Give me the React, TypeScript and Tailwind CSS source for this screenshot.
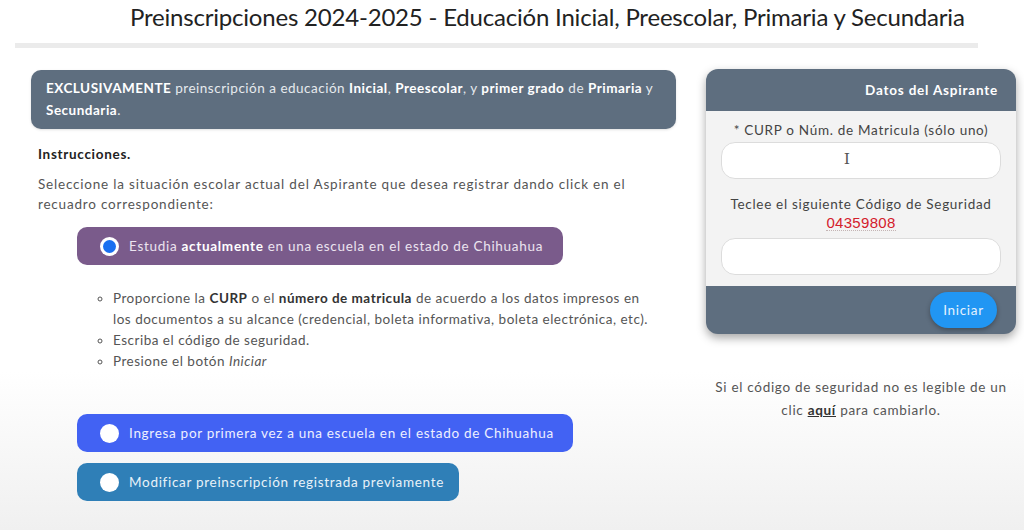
import React from 'react';

const font = { fontFamily: 'Lato, "Open Sans", sans-serif' };

const Radio = ({ checked }: { checked?: boolean }) =>
  checked ? (
    <span className="flex h-[19px] w-[19px] shrink-0 items-center justify-center rounded-full bg-white">
      <span className="h-[13px] w-[13px] rounded-full bg-[#1a6ff0]" />
    </span>
  ) : (
    <span className="h-[19px] w-[19px] shrink-0 rounded-full bg-white" />
  );

const App = () => {
  return (
    <div
      className="h-[530px] w-[1024px] overflow-hidden bg-gradient-to-b from-white from-70% to-[#f0f0f0] text-[13.5px] tracking-[0.7px]"
      style={font}
    >
      <h1 className="pl-[130px] pt-[2px] text-[24px] leading-[30px] text-[#222] tracking-[-0.2px]">
        Preinscripciones 2024-2025 - Educación Inicial, Preescolar, Primaria y Secundaria
      </h1>
      <div className="ml-[15px] mt-[11px] h-[5px] w-[963px] bg-[#ebebeb]" />

      <div className="mt-[22px] flex">
        <div className="ml-[31px] w-[645px]">
          <div className="rounded-[10px] bg-[#5e6e7f] px-[15px] pt-[7px] pb-[8px] leading-[22px] tracking-[0.5px] text-[#e6eaee] shadow-sm">
            <b className="text-white">EXCLUSIVAMENTE</b> preinscripción a educación <b className="text-white">Inicial</b>,{' '}
            <b className="text-white">Preescolar</b>, y <b className="text-white">primer grado</b> de{' '}
            <b className="text-white">Primaria</b> y <b className="text-white">Secundaria</b>.
          </div>

          <div className="ml-[7px] mt-[15px] font-bold text-[#222]">Instrucciones.</div>
          <p className="ml-[7px] mt-[10px] leading-[20px] text-[#555] tracking-[0.8px]">
            Seleccione la situación escolar actual del Aspirante que desea registrar dando click en el
            <br />
            recuadro correspondiente:
          </p>

          <div className="ml-[46px] mt-[13px] flex h-[38px] w-[486px] items-center gap-[10px] rounded-[10px] bg-[#7a5b8b] pl-[23px] text-[#ece4f0]">
            <Radio checked />
            <span>
              Estudia <b className="text-white">actualmente</b> en una escuela en el estado de Chihuahua
            </span>
          </div>

          <ul className="ml-[82px] mt-[23px] list-[circle] leading-[21px] text-[#555] tracking-[0.5px]">
            <li>
              Proporcione la <b className="text-[#333]">CURP</b> o el <b className="text-[#333]">número de matricula</b> de
              acuerdo a los datos impresos en
              <br />
              los documentos a su alcance (credencial, boleta informativa, boleta electrónica, etc).
            </li>
            <li>Escriba el código de seguridad.</li>
            <li>
              Presione el botón <i>Iniciar</i>
            </li>
          </ul>

          <div className="ml-[46px] mt-[42px] flex h-[38px] w-[496px] items-center gap-[10px] rounded-[10px] bg-[#4262f3] pl-[23px] text-[#eef0ff]">
            <Radio />
            <span>Ingresa por primera vez a una escuela en el estado de Chihuahua</span>
          </div>
          <div className="ml-[46px] mt-[11px] flex h-[38px] w-[382px] items-center gap-[10px] rounded-[10px] bg-[#2f7fb7] pl-[23px] text-[#e8f2f9]">
            <Radio />
            <span>Modificar preinscripción registrada previamente</span>
          </div>
        </div>

        <div className="ml-[30px] w-[310px] -mt-[1px]">
          <div className="overflow-hidden rounded-[12px] bg-[#5e6e7f] shadow-[0_4px_10px_rgba(0,0,0,0.35)]">
            <div className="flex h-[42px] items-center justify-end pr-[18px] font-bold text-white tracking-[0.8px]">
              Datos del Aspirante
            </div>
            <div className="bg-[#f3f3f3] px-[15px] pt-[9px] pb-[11px] text-center text-[#444]">
              <div className="leading-[20px]">* CURP o Núm. de Matricula (sólo uno)</div>
              <div className="relative mt-[2px] h-[37px] rounded-[14px] border border-[#dcdcdc] bg-white">
                <span className="absolute left-[122px] top-[6px] font-serif text-[17px] leading-[20px] text-[#555]">I</span>
              </div>
              <div className="mt-[15px] leading-[20px]">Teclee el siguiente Código de Seguridad</div>
              <div
                className="mx-auto mt-[1px] w-fit border-b border-dotted border-[#c4b4b4] text-[15px] leading-[15px] tracking-[0.3px] text-[#d3202c]"
                style={{ fontFamily: '"Liberation Sans", sans-serif' }}
              >
                04359808
              </div>
              <div className="mt-[7px] h-[37px] rounded-[14px] border border-[#dcdcdc] bg-white" />
            </div>
            <div className="flex h-[48px] items-center justify-end pr-[19px]">
              <button className="h-[36px] w-[67px] rounded-[18px] bg-[#2196f3] text-[#e5f2fe] shadow-[0_2px_5px_rgba(0,0,0,0.3)]">
                Iniciar
              </button>
            </div>
          </div>

          <p className="mt-[42px] text-center leading-[23px] text-[#555]">
            Si el código de seguridad no es legible de un
            <br />
            clic <b className="text-[#333] underline">aquí</b> para cambiarlo.
          </p>
        </div>
      </div>
    </div>
  );
};

export default App;
